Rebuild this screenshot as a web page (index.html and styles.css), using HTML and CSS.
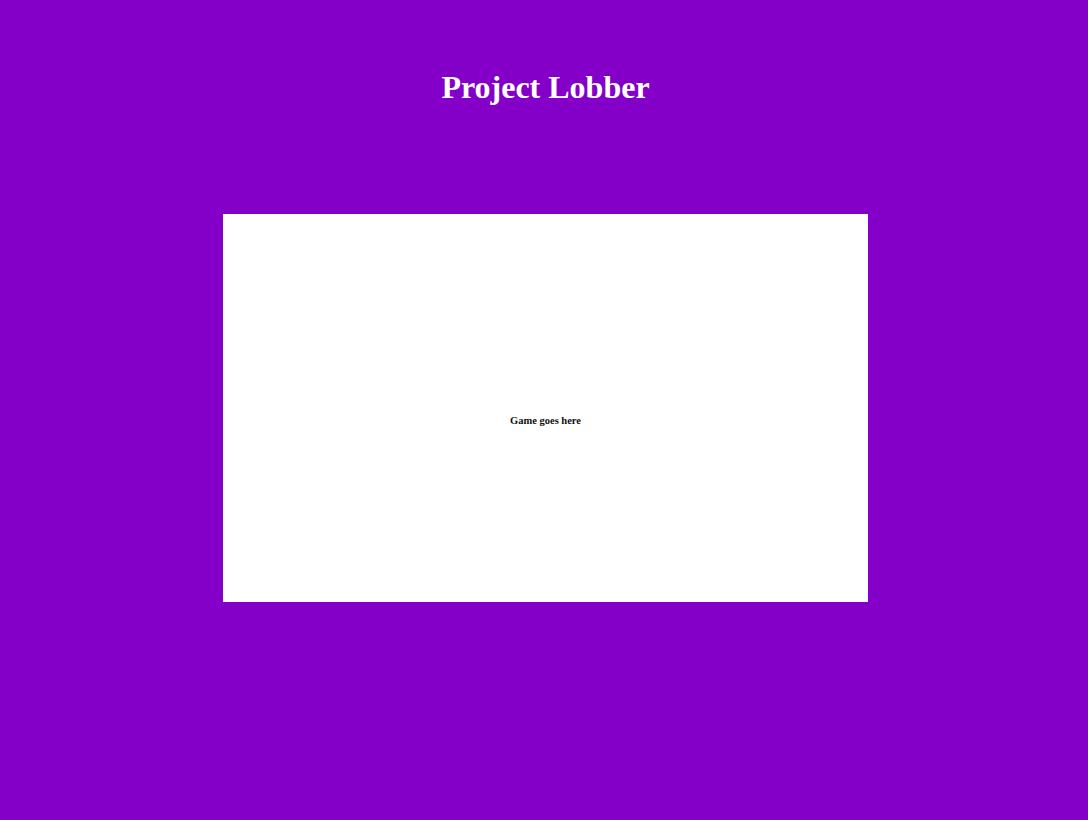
FILE: index.html
```html
<!DOCTYPE html>
<html>
<head>
<meta charset="utf-8">
<link rel="stylesheet" href="styles.css">
</head>
<body>
<header class="header">
  <h1 class="title">Project Lobber</h1>
</header>
<main class="stage">
  <div class="game">
    <p class="game-text">Game goes here</p>
  </div>
</main>
</body>
</html>
```
FILE: styles.css
```css
html, body {
  margin: 0;
  padding: 0;
  height: 100%;
}
body {
  background: #8400c8;
  font-family: "Liberation Serif", serif;
}
.header {
  display: flex;
  justify-content: center;
  padding-top: 68px;
  padding-left: 3px;
}
.title {
  margin: 0;
  color: #fff;
  font-family: "Liberation Serif", serif;
  font-size: 32px;
  font-weight: bold;
  line-height: 38px;
}
.stage {
  display: flex;
  justify-content: center;
  padding-top: 108px;
}
.game {
  width: 645px;
  height: 388px;
  margin-left: 3px;
  background: #fff;
  display: flex;
  align-items: center;
  justify-content: center;
}
.game-text {
  margin: 0;
  font-family: "Liberation Serif", serif;
  font-size: 10.5px;
  font-weight: bold;
  color: #111;
  position: relative;
  top: 12px;
}
```
